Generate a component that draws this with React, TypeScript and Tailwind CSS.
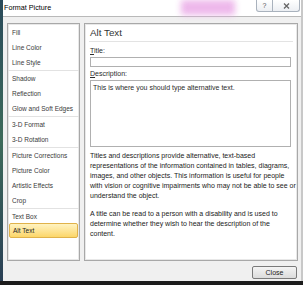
import React from "react";

const items: { label: string; sep?: boolean; active?: boolean }[] = [
  { label: "Fill" },
  { label: "Line Color" },
  { label: "Line Style", sep: true },
  { label: "Shadow" },
  { label: "Reflection" },
  { label: "Glow and Soft Edges", sep: true },
  { label: "3-D Format" },
  { label: "3-D Rotation", sep: true },
  { label: "Picture Corrections" },
  { label: "Picture Color" },
  { label: "Artistic Effects" },
  { label: "Crop", sep: true },
  { label: "Text Box" },
  { label: "Alt Text", active: true },
];

export default function App() {
  return (
    <div
      className="w-[303px] h-[285px] flex flex-col bg-[#1c1c1c] overflow-hidden text-[#2b2b2b]"
      style={{ fontFamily: '"Liberation Sans", Arial, sans-serif' }}
    >
      <div className="flex flex-1 min-h-0">
        {/* window edge behind */}
        <div className="w-[3px] bg-gradient-to-b from-[#2a4a5a] via-[#3e6b5a] to-[#2a3f55]" />

        <div className="flex-1 flex flex-col bg-[#f0f0f0] border-r-2 border-[#c8c8c8]">
          {/* title bar */}
          <div className="relative h-[17px] bg-white border-b border-[#b9b9b9] flex items-center pl-[1px]">
            <div className="absolute left-[178px] top-0 w-[54px] h-[15px] bg-[#e9a6e6] blur-[3px] opacity-80" />
            <span className="relative text-[7.2px] text-black leading-none">Format Picture</span>
            <div className="absolute right-[1px] top-0 flex h-[12px]">
              <div className="w-[17px] h-full border border-t-0 border-[#a9b2bd] rounded-bl-[3px] bg-gradient-to-b from-[#ffffff] to-[#eceff3] flex items-center justify-center text-[7px] text-[#555] leading-none">
                ?
              </div>
              <div className="w-[27px] h-full border border-t-0 border-l-0 border-[#a9b2bd] rounded-br-[3px] bg-gradient-to-b from-[#ffffff] to-[#eceff3] flex items-center justify-center">
                <svg width="7" height="6" viewBox="0 0 7 6">
                  <path d="M1 0.5 L6 5.5 M6 0.5 L1 5.5" stroke="#666" strokeWidth="1.3" fill="none" />
                </svg>
              </div>
            </div>
          </div>

          {/* body */}
          <div className="flex-1 flex flex-col pt-[6px] pl-[4px] pr-[1px]">
            <div className="flex gap-[4px] h-[238px]">
              {/* categories */}
              <div className="w-[73px] bg-white border border-[#a8a8a8] shadow-[inset_0_0_0_1px_#e8e8e8] pt-[1px] flex flex-col">
                {items.map((it) => (
                  <div key={it.label} className={it.sep ? "border-b border-[#e2e2e2]" : ""}>
                    {it.active ? (
                      <div className="mx-[1px] h-[15px] -mt-[1px] flex items-center pl-[3px] rounded-[2px] border border-[#e0b24a] bg-gradient-to-b from-[#fff3c0] to-[#fcd667] text-[6.5px] text-[#222]">
                        {it.label}
                      </div>
                    ) : (
                      <div className="h-[15px] flex items-center pl-[4px] text-[6.5px] text-[#3a3a3a] whitespace-nowrap">
                        {it.label}
                      </div>
                    )}
                  </div>
                ))}
              </div>

              {/* content */}
              <div className="w-[214px] bg-white border border-[#a8a8a8] shadow-[inset_0_0_0_1px_#e8e8e8] px-[4px] pt-[4px]">
                <div className="text-[9.8px] text-[#333] leading-none pb-[3px] border-b border-[#e3e3e3] pl-[1px]">Alt Text</div>
                <div className="pl-[1px] pr-[2px]">
                  <div className="text-[7px] leading-none mt-[5px]">
                    <span className="underline">T</span>itle:
                  </div>
                  <div className="mt-[3px] h-[10px] border border-[#b0b0b0] bg-white" />
                  <div className="text-[7px] leading-none mt-[3px]">
                    <span className="underline">D</span>escription:
                  </div>
                  <div className="mt-[3px] h-[67px] border border-[#b0b0b0] bg-white px-[2px] pt-[3px] text-[7px] leading-none">
                    This is where you should type alternative text.
                  </div>
                  <p className="mt-[4px] -mr-[4px] text-[7px] leading-[10px] text-[#222] whitespace-nowrap">
                    Titles and descriptions provide alternative, text-based
                    <br />
                    representations of the information contained in tables, diagrams,
                    <br />
                    images, and other objects. This information is useful for people
                    <br />
                    with vision or cognitive impairments who may not be able to see or
                    <br />
                    understand the object.
                  </p>
                  <p className="mt-[8px] text-[7px] leading-[10px] text-[#222] whitespace-nowrap">
                    A title can be read to a person with a disability and is used to
                    <br />
                    determine whether they wish to hear the description of the
                    <br />
                    content.
                  </p>
                </div>
              </div>
            </div>

            <div className="flex justify-end mt-[5px] pr-[3px]">
              <button className="w-[45px] h-[13px] rounded-[2px] border border-[#7a7a7a] bg-gradient-to-b from-[#f4f4f4] to-[#dcdcdc] text-[7px] leading-none text-[#222]">
                Close
              </button>
            </div>
          </div>
        </div>
      </div>
      <div className="h-[4px] bg-[#1c1c1c]" />
    </div>
  );
}
